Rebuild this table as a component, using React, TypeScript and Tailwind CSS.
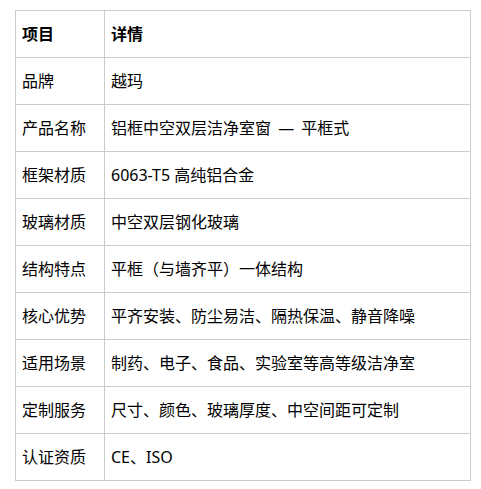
import React from "react";

const rows: [string, React.ReactNode][] = [
  ["品牌", "越玛"],
  [
    "产品名称",
    <>
      铝框中空双层洁净室窗 <span className="inline-block mx-[3px]">—</span> 平框式
    </>,
  ],
  ["框架材质", "6063-T5 高纯铝合金"],
  ["玻璃材质", "中空双层钢化玻璃"],
  ["结构特点", "平框（与墙齐平）一体结构"],
  ["核心优势", "平齐安装、防尘易洁、隔热保温、静音降噪"],
  ["适用场景", "制药、电子、食品、实验室等高等级洁净室"],
  ["定制服务", "尺寸、颜色、玻璃厚度、中空间距可定制"],
  ["认证资质", "CE、ISO"],
];

export default function App() {
  return (
    <div
      className="bg-white w-[481px] h-[489px] pt-[10px] pl-[15px]"
      style={{ fontFamily: '"Noto Sans", "Noto Sans CJK SC", sans-serif' }}
    >
      <table className="border-collapse text-[16px] text-black w-[456px] table-fixed">
        <colgroup>
          <col className="w-[89px]" />
          <col />
        </colgroup>
        <thead>
          <tr className="h-[47px]">
            <th className="border border-[#cccccc] px-[6px] text-left font-bold">项目</th>
            <th className="border border-[#cccccc] px-[6px] text-left font-bold">详情</th>
          </tr>
        </thead>
        <tbody>
          {rows.map(([k, v]) => (
            <tr key={k} className="h-[47px]">
              <td className="border border-[#cccccc] px-[6px]">{k}</td>
              <td className="border border-[#cccccc] px-[6px] whitespace-pre">{v}</td>
            </tr>
          ))}
        </tbody>
      </table>
    </div>
  );
}
